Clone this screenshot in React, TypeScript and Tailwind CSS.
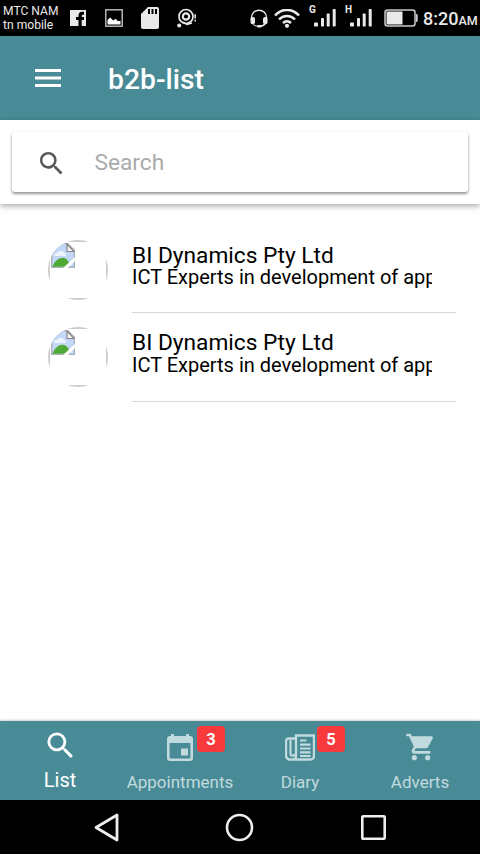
import type { ReactNode } from "react";

const SEARCH_PATH =
  "M15.5 14h-.79l-.28-.27A6.47 6.47 0 0 0 16 9.5 6.5 6.5 0 1 0 9.5 16c1.61 0 3.09-.59 4.23-1.57l.27.28v.79l5 4.99L20.49 19l-4.99-5zm-6 0C7.01 14 5 11.99 5 9.5S7.01 5 9.5 5 14 7.01 14 9.5 11.99 14 9.5 14z";

const items = [
  { id: 1, name: "BI Dynamics Pty Ltd", about: "ICT Experts in development of applications" },
  { id: 2, name: "BI Dynamics Pty Ltd", about: "ICT Experts in development of applications" },
];

function SignalBars({ label }: { label: string }) {
  return (
    <div className="relative h-[18px] w-[27px]">
      <span className="absolute -top-[5px] left-0 text-[10px] leading-[12px] font-bold">{label}</span>
      <svg className="absolute bottom-0 left-[5px]" width="22" height="18" viewBox="0 0 22 18" fill="currentColor">
        <rect x="0" y="13.5" width="4" height="4" rx="0.8" />
        <rect x="7" y="9" width="3" height="8.5" rx="0.8" />
        <rect x="12.7" y="4.5" width="3" height="13" rx="0.8" />
        <rect x="18.7" y="0" width="3" height="17.5" rx="0.8" />
      </svg>
    </div>
  );
}

function StatusBar() {
  return (
    <div className="flex h-9 shrink-0 items-center bg-black text-[#e9e9e9]">
      <div className="ml-[3px] w-[67px] text-[12.1px] leading-[14px] whitespace-nowrap">
        <div>MTC NAM</div>
        <div>tn mobile</div>
      </div>
      <svg width="16" height="16" viewBox="0 0 16 16">
        <rect width="16" height="16" fill="#e9e9e9" />
        <path d="M8.5 16V10H6V7h2.5V5.4C8.5 3.2 10 1.8 12.2 1.8H14v3h-1.2c-.8 0-1.1.4-1.1 1.1V7H14v3h-2.3v6z" fill="#000" />
      </svg>
      <svg className="ml-[19px]" width="18" height="18" viewBox="0 0 18 18">
        <rect x="0.8" y="0.8" width="16.4" height="16.4" fill="none" stroke="#d0d0d0" strokeWidth="1.3" />
        <path d="M2.5 15.5V11l2.7-2.5 3 3 2.5-1.8 2.3 2.6 2.5-.6v3.8z" fill="#fff" />
      </svg>
      <svg className="ml-[18px]" width="18" height="22" viewBox="0 0 18 22">
        <path d="M7 0h9a2 2 0 0 1 2 2v18a2 2 0 0 1-2 2H2a2 2 0 0 1-2-2V7z" fill="#e9e9e9" />
        <path d="M7 2h2v5H7zM10.5 2h2v5h-2zM14 2h2v5h-2z" fill="#000" />
      </svg>
      <svg className="ml-[18px]" width="20" height="20" viewBox="0 0 20 20" fill="none" stroke="#e9e9e9">
        <circle cx="9" cy="8.5" r="7" strokeWidth="1.7" />
        <circle cx="9" cy="8.5" r="3.2" strokeWidth="2.2" />
        <path d="M6 14.2l4 2.3 5-1.5" strokeWidth="1.4" />
        <circle cx="2.2" cy="17.4" r="2" fill="#e9e9e9" stroke="none" />
        <path d="M18.2 6.2v4.2M18.2 11.8v1.6" strokeWidth="1.5" />
      </svg>
      <svg className="ml-[53px]" width="18" height="19" viewBox="0 0 18 19" fill="none" stroke="#e9e9e9">
        <path d="M1.5 11V8.5C1.5 4 4.8 1.2 9 1.2s7.5 2.8 7.5 7.3V11M16 12c-.6 3-2.7 5-5.5 5.2" strokeWidth="1.4" />
        <path d="M1.6 12C2 15 4 17 7 17" strokeWidth="1" />
        <rect x="0.5" y="8" width="4.5" height="7.2" rx="2" fill="#e9e9e9" stroke="none" />
        <rect x="13" y="8" width="4.5" height="7.2" rx="2" fill="#e9e9e9" stroke="none" />
        <rect x="7" y="16" width="4.6" height="2.4" rx="1" fill="#e9e9e9" stroke="none" />
      </svg>
      <svg className="ml-1.5" width="26" height="19" viewBox="0 0 26 19" fill="none" stroke="#e9e9e9" strokeWidth="2.5">
        <path d="M1 6.5C8-1 18-1 25 6.5M5 10.5c4.5-4.7 11.5-4.7 16 0M9 14c2.3-2.2 5.7-2.2 8 0" />
        <circle cx="13" cy="16.8" r="2.1" fill="#e9e9e9" stroke="none" />
      </svg>
      <div className="ml-[9px] flex gap-[9px]">
        <SignalBars label="G" />
        <SignalBars label="H" />
      </div>
      <svg className="ml-3" width="34" height="18" viewBox="0 0 34 18">
        <rect x="1" y="1" width="30" height="16" rx="2.5" fill="none" stroke="#c9c9c9" strokeWidth="1.5" />
        <rect x="2.5" y="2.5" width="16" height="13" fill="#e9e9e9" />
        <path d="M32 5c1.2 0 1.7.5 1.7 1.5v5c0 1-.5 1.5-1.7 1.5z" fill="#c9c9c9" />
      </svg>
      <div className="ml-[5px] pt-px text-[18px] leading-none font-medium whitespace-nowrap">
        8:20<span className="text-[12.5px]">AM</span>
      </div>
    </div>
  );
}

function BrokenImage() {
  return (
    <svg width="24" height="25" viewBox="0 0 24 25">
      <path d="M0 0h17l7 7v18H0z" fill="#a9aeb8" />
      <path d="M1.3 1.3h15v7h6.4v15.4H1.3z" fill="#c3d8f8" />
      <path d="M16 1v7.5h7z" fill="#f5f5f5" stroke="#858585" strokeWidth="1.2" />
      <path d="M3.5 13c-.5-3 1.5-3.5 3-3 1-3 6-3 6.5 0 2 0 2.5 2 1.5 3z" fill="#eef3fd" />
      <path d="M1.3 23.7C4 17.5 8 14.5 12 14.7c3.5.3 6 3.3 7 9z" fill="#4ea935" />
      <path d="M12 25L24 14v4l-7 7z" fill="#fff" />
    </svg>
  );
}

function Tab({ label, badge, active, children }: { label: string; badge?: number; active?: boolean; children: ReactNode }) {
  return (
    <div className={active ? "relative flex w-[120px] flex-col items-center pt-px text-white" : "relative flex w-[120px] flex-col items-center text-[#c0dade]"}>
      <div className={active ? "flex h-[46px] items-center" : "flex h-[52px] items-center"}>{children}</div>
      <span className={active ? "text-[20px] leading-6" : "text-[17px] leading-[18px]"}>{label}</span>
      {badge && (
        <span className="absolute top-[5px] left-[77px] h-[26px] w-7 rounded-[4px] bg-[#f93a3c] text-center text-[16.5px] leading-[27px] font-bold text-white">
          {badge}
        </span>
      )}
    </div>
  );
}

export default function App() {
  return (
    <div className="flex h-[854px] w-[480px] flex-col overflow-hidden bg-white font-['Roboto',sans-serif]">
      <StatusBar />

      {/* Header */}
      <header className="flex h-[84px] shrink-0 items-center bg-[#488b96] pl-[35px] text-white">
        <svg width="26" height="18" viewBox="0 0 26 18" fill="currentColor">
          <path d="M0 0h26v3H0zM0 7.5h26v3H0zM0 15h26v3H0z" />
        </svg>
        <h1 className="ml-[47px] pt-[3px] text-[28.3px] leading-8 font-medium">b2b-list</h1>
      </header>

      {/* Search */}
      <div className="h-[84px] shrink-0 p-3 shadow-[0_2px_6px_rgba(0,0,0,0.35)]">
        <div className="flex h-[60px] items-center rounded-[3px] bg-white pt-0.5 pl-6 shadow-[0_2px_3px_rgba(0,0,0,0.4),0_0_2px_rgba(0,0,0,0.1)]">
          <svg width="31" height="31" viewBox="0 0 24 24" fill="#585858">
            <path d={SEARCH_PATH} />
          </svg>
          <span className="ml-[27.5px] text-[22.7px] leading-7 text-[#aaaaaa]">Search</span>
        </div>
      </div>

      {/* List */}
      <main className="flex flex-1 flex-col gap-0.5 pt-6">
        {items.map((item) => (
          <div key={item.id} className="group flex h-[85px] pr-6 pl-12 last:h-[87px]">
            <div className="mt-3 h-[60px] w-[60px] shrink-0 overflow-hidden rounded-full">
              <div className="h-full w-full border-2 border-[#cccccc] pt-px pl-px">
                <BrokenImage />
              </div>
            </div>
            <div className="ml-6 min-w-0 flex-1 border-b border-[#d6d6d6] pt-[17px] pr-6">
              <h2 className="text-[22.7px] leading-[22px] text-black">{item.name}</h2>
              <p className="overflow-hidden pb-1 text-[20px] leading-[20px] whitespace-nowrap text-black group-last:leading-[22px]">
                {item.about}
              </p>
            </div>
          </div>
        ))}
      </main>

      {/* Tabs */}
      <nav className="flex h-[79px] shrink-0 bg-[#488b96] shadow-[0_-1px_2px_rgba(0,0,0,0.2)]">
        <Tab label="List" active>
          <svg width="35" height="35" viewBox="0 0 24 24" fill="currentColor">
            <path d={SEARCH_PATH} />
          </svg>
        </Tab>
        <Tab label="Appointments" badge={3}>
          <svg width="26" height="27" viewBox="0 0 26 27" fill="currentColor">
            <path fillRule="evenodd" d="M4 0h3v2h12V0h3v2h1a3 3 0 0 1 3 3v19a3 3 0 0 1-3 3H3a3 3 0 0 1-3-3V5a3 3 0 0 1 3-3h1zM2.6 9v14.4a1 1 0 0 0 1 1h18.8a1 1 0 0 0 1-1V9z" />
            <rect x="14" y="14.5" width="7" height="7" />
          </svg>
        </Tab>
        <Tab label="Diary" badge={5}>
          <svg width="30" height="27" viewBox="0 0 30 27" fill="none" stroke="currentColor" strokeWidth="2.2">
            <path d="M11 1.5h18v20.5a3.5 3.5 0 0 1-3.5 3.5H5A4 4 0 0 1 1 21.5V7a2.5 2.5 0 0 1 2.5-2.5H11zM11 4v17.5c0 2.5-1 4-3 4" strokeWidth="2.4" />
            <path d="M5.5 6v13.5a2 2 0 0 0 4 .5" />
            <path d="M15 6.5h6.5M15 10.7h10.5M15 14.5h10.5M15 18.3h10.5M15 22h10.5" />
          </svg>
        </Tab>
        <Tab label="Adverts">
          <svg className="ml-0.5" width="32" height="32" viewBox="0 0 24 24" fill="currentColor">
            <path d="M7 18c-1.1 0-1.99.9-1.99 2S5.9 22 7 22s2-.9 2-2-.9-2-2-2zM1 2v2h2l3.6 7.59-1.35 2.45c-.16.28-.25.61-.25.96 0 1.1.9 2 2 2h12v-2H7.42c-.14 0-.25-.11-.25-.25l.03-.12.9-1.63h7.45c.75 0 1.41-.41 1.75-1.03l3.58-6.49A1 1 0 0 0 20 4H5.21l-.94-2H1zm16 16c-1.1 0-1.99.9-1.99 2s.89 2 1.99 2 2-.9 2-2-.9-2-2-2z" />
          </svg>
        </Tab>
      </nav>

      {/* System buttons */}
      <div className="flex h-[54px] shrink-0 items-center bg-black pl-[94px]">
        <svg width="26" height="30" viewBox="0 0 26 30" fill="none" stroke="#eeeeee" strokeWidth="2.8" strokeLinejoin="round">
          <path d="M23 3v25L2 15.5z" />
        </svg>
        <svg className="ml-[105px]" width="29" height="29" viewBox="0 0 29 29" fill="none" stroke="#eeeeee" strokeWidth="2.6">
          <circle cx="14.5" cy="14.5" r="12.5" />
        </svg>
        <svg className="ml-[107px]" width="25" height="25" viewBox="0 0 25 25" fill="none" stroke="#eeeeee" strokeWidth="2.6">
          <rect x="1.3" y="1.3" width="22.4" height="22.4" rx="0.8" />
        </svg>
      </div>
    </div>
  );
}
